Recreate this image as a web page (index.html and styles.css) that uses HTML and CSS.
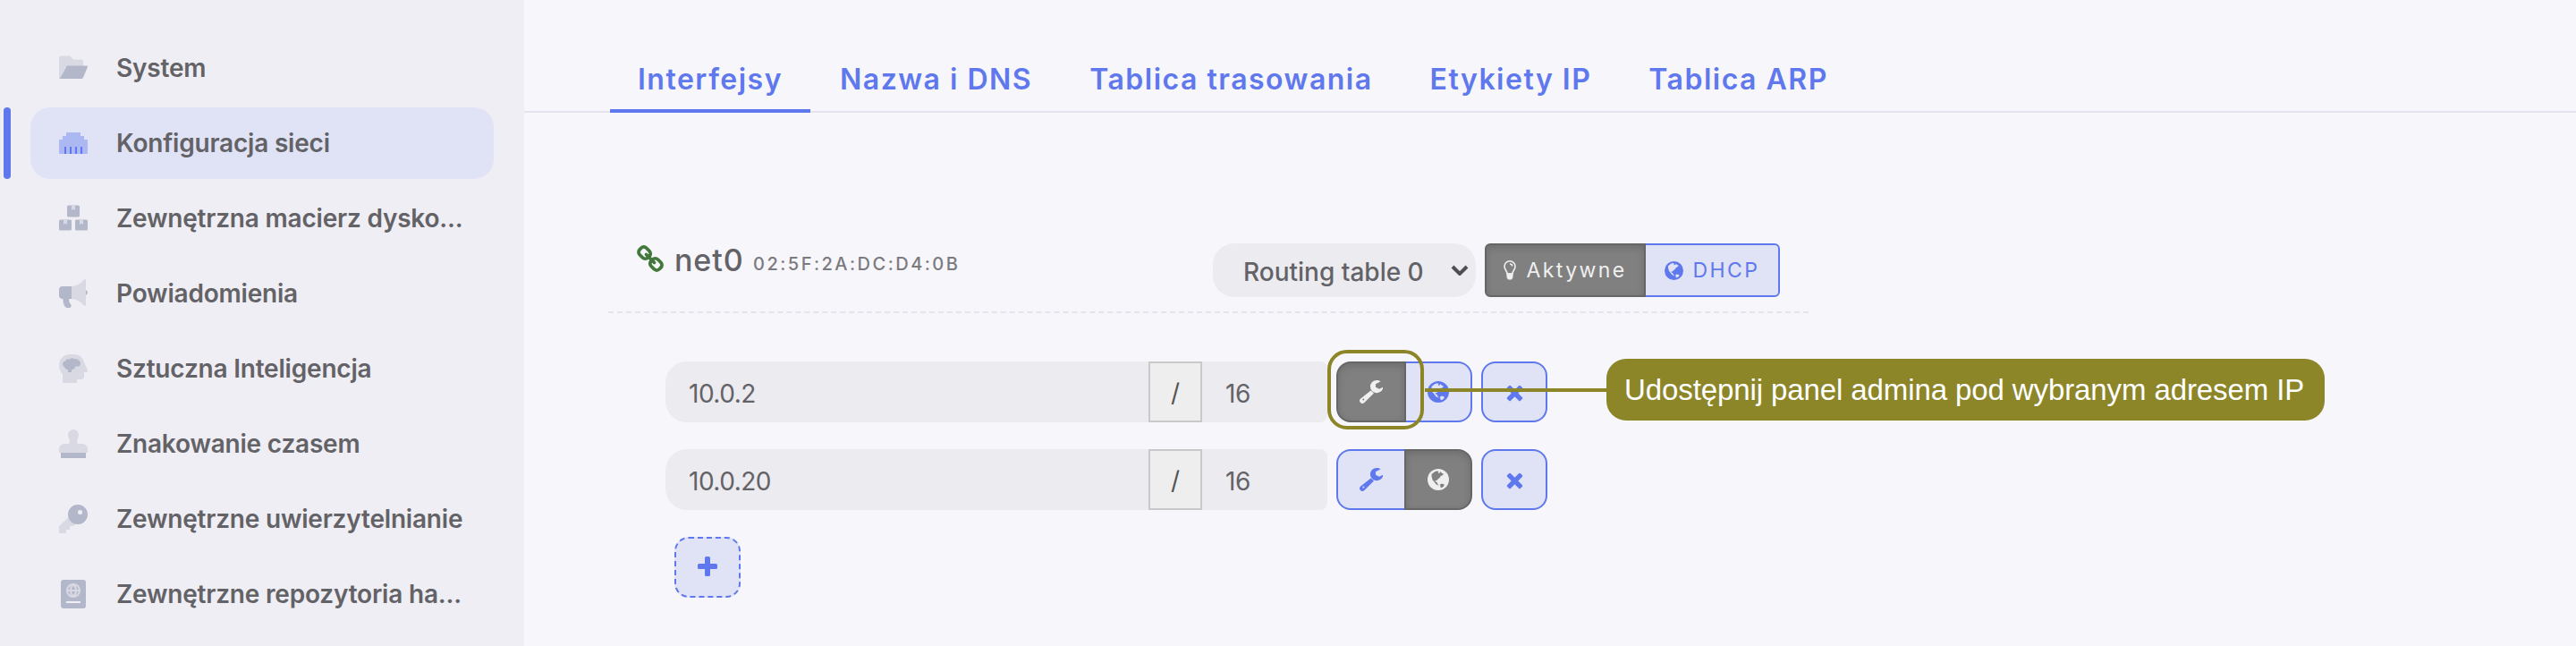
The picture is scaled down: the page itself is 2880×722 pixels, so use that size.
FILE: index.html
```html
<!DOCTYPE html>
<html lang="pl">
<head>
    <meta charset="UTF-8">
    <meta name="viewport" content="width=device-width, initial-scale=1.0">
    <title>Konfiguracja sieci</title>
    <link rel="stylesheet" href="styles.css">
</head>
<body>
    <!-- shared icons -->
    <svg class="sprite">
        <symbol id="wrench" viewBox="0 0 26 26">
            <path d="M12.6 11.6 1.2 20.4a3.3 3.3 0 0 0-.2 4.6 3.3 3.3 0 0 0 4.6-.2L16 14.6z"/>
            <path d="M23.6 1.2 18 4.2v3.6l4 2 4.2-2.2c.3 4-3.400 6.600-7 6.600-4 0-7.200-3.200-7.200-7.100S15.200 0 19.200 0c1.600 0 3.200.4 4.400 1.200z"/>
            <circle class="hole" cx="4.300" cy="21.600" r="1"/>
        </symbol>
        <symbol id="globe" viewBox="0 0 24 24">
            <circle cx="12" cy="12" r="12"/>
            <path class="hole" d="M4.500 6 8 3.200l3-.9 1.500 1.200-.8 1.400 2-.3 1-1.500 1.200 1.600 2 .8-.8 1.400-2.300 1-1.200 2-2 1.600-1.400 1.700-1.700-.4.6 1.700 1.600.6.5 2 1.500.8-.4.6-2.800-1.300-2-2.600-1.900-2.400-1-3.500z"/>
            <path class="hole" d="m14 17.500 1.800-.9 3 .8-.6 2-2.600 1.800-1-.5z"/>
        </symbol>
        <symbol id="times" viewBox="0 0 20 20">
            <rect x="-1" y="7.100" width="22" height="5.800" rx="1.500" transform="rotate(45 10 10)"/>
            <rect x="-1" y="7.100" width="22" height="5.800" rx="1.500" transform="rotate(-45 10 10)"/>
        </symbol>
    </svg>

    <div class="layout">
        <nav class="sidebar">
            <a class="menu-item">
                <svg class="menu-icon" viewBox="0 0 32 32"><path class="light" d="M0 29V5.500a3 3 0 0 1 3-3h8a3 3 0 0 1 2 .9L16 6.500h8a3 3 0 0 1 3 3V14H9.500a3 3 0 0 0-2.700 1.600z"/><path class="dark" d="M8.300 14.200A1.600 1.600 0 0 1 9.600 13.500H31a1 1 0 0 1 .9 1.500L26.800 27a2 2 0 0 1-1.700 1H.6z"/></svg>
                <span>System</span>
            </a>
            <a class="menu-item active">
                <svg class="menu-icon" viewBox="0 0 32 32"><path class="light" d="M8 4.500a.5.5 0 0 1 .5-.5h15a.5.5 0 0 1 .5.5V8h4v4h3a1 1 0 0 1 1 1v14a1 1 0 0 1-1 1H1a1 1 0 0 1-1-1V13a1 1 0 0 1 1-1h3V8h4z"/><path class="dark" d="M6 20h2v8H6zm6 0h2v8h-2zm6 0h2v8h-2zm6 0h2v8h-2z"/></svg>
                <span>Konfiguracja sieci</span>
            </a>
            <a class="menu-item">
                <svg class="menu-icon" viewBox="0 0 32 32"><path class="dark" d="M10.500 1.500h11a1.500 1.500 0 0 1 1.500 1.500v10a1.500 1.500 0 0 1-1.500 1.500h-11A1.500 1.500 0 0 1 9 13V3a1.500 1.500 0 0 1 1.500-1.500zM1.500 17.500h11a1.500 1.500 0 0 1 1.500 1.500v9a1.500 1.500 0 0 1-1.500 1.500h-11A1.500 1.500 0 0 1 0 28v-9a1.500 1.500 0 0 1 1.500-1.500zm18 0h11A1.500 1.500 0 0 1 32 19v9a1.500 1.500 0 0 1-1.500 1.500h-11A1.500 1.500 0 0 1 18 28v-9a1.500 1.500 0 0 1 1.500-1.500z"/><path class="light" d="M14 1.500h4V7l-2-1.300L14 7zM5 17.500h4V23l-2-1.300L5 23zm18 0h4V23l-2-1.300L23 23z"/></svg>
                <span>Zewnętrzna macierz dysko...</span>
            </a>
            <a class="menu-item">
                <svg class="menu-icon" viewBox="0 0 32 32"><path class="dark" d="M4 8h10v14h-2.500c-1 2.500 0 4 1.700 6.200 1 1.400.3 3.800-1.500 3.800H8.500C6 31 4 25.500 4.500 22H4a4 4 0 0 1-4-4v-6a4 4 0 0 1 4-4zm26 4.200c2.500 1 2.500 4.600 0 5.600z"/><path class="light" d="M14 8c6 0 10.500-4 14-7.500.8-.8 2-.3 2 1v27c0 1.300-1.200 1.800-2 1C24.500 26 20 22 14 22z"/></svg>
                <span>Powiadomienia</span>
            </a>
            <a class="menu-item">
                <svg class="menu-icon" viewBox="0 0 32 32"><path class="light" d="M4 32V22c-2.500-2.500-4-5.600-4-9C0 5 5.500 0 13 0h4c5 0 9 3 10.500 7.500L32 18c.3 1-.4 2-1.500 2H28v5a3 3 0 0 1-3 3h-5v4z"/><path class="dark" d="M4 11c0-2 1.500-3.200 3-3.500C8 5.500 10.500 4.800 12 5.800c1.500-2 4-2 5-.2 1.500-1 3.600-.5 4.300 1 1.700.4 2.700 2 2.700 3.600 0 2.200-1.500 3.300-3 3.300h-3c0 2-1.500 3.800-4 3.800V20h-4v-3c-2.500 0-3.500-1.500-3.800-3C4.800 13.300 4 12.400 4 11z"/></svg>
                <span>Sztuczna Inteligencja</span>
            </a>
            <a class="menu-item">
                <svg class="menu-icon" viewBox="0 0 32 32"><path class="light" d="M0 26v-4a6 6 0 0 1 6-6h4a2 2 0 0 0 2-2c0-3-2-4.500-2-8a6 6 0 0 1 12 0c0 3.500-2 5-2 8a2 2 0 0 0 2 2h4a6 6 0 0 1 6 6v4z"/><path class="dark" d="M2 26h28v6H2z"/></svg>
                <span>Znakowanie czasem</span>
            </a>
            <a class="menu-item">
                <svg class="menu-icon" viewBox="0 0 32 32"><path class="light" d="M11 14 .6 23.400A2 2 0 0 0 0 25v7h8v-4h4v-4h4l3-3z"/><path class="dark" fill-rule="evenodd" d="M21 0a11 11 0 1 1 0 22 11 11 0 0 1 0-22zm2.500 6a2.500 2.500 0 1 0 0 5 2.500 2.500 0 0 0 0-5z"/></svg>
                <span>Zewnętrzne uwierzytelnianie</span>
            </a>
            <a class="menu-item">
                <svg class="menu-icon" viewBox="0 0 32 32"><path class="dark" d="M5 0h22a3 3 0 0 1 3 3v26a3 3 0 0 1-3 3H5a3 3 0 0 1-3-3V3a3 3 0 0 1 3-3z"/><path class="cover" d="M16 5a7 7 0 1 0 0 14 7 7 0 0 0 0-14zM9 12h14M16 5c-4 4-4 10 0 14M16 5c4 4 4 10 0 14"/><path class="bar" d="M8 24h16v2H8z"/></svg>
                <span>Zewnętrzne repozytoria ha...</span>
            </a>
        </nav>

        <main class="content">
            <div class="tabs">
                <a class="tab selected">Interfejsy</a>
                <a class="tab">Nazwa i DNS</a>
                <a class="tab">Tablica trasowania</a>
                <a class="tab">Etykiety IP</a>
                <a class="tab">Tablica ARP</a>
            </div>

            <section class="interface">
                <header class="interface-header">
                    <svg class="link-icon" viewBox="0 0 30 30"><rect x="-6.500" y="-5.300" width="13" height="10.600" rx="4.200" transform="translate(8.600 8.600) rotate(45)"/><rect x="-6.500" y="-5.300" width="13" height="10.600" rx="4.200" transform="translate(21.400 21.400) rotate(45)"/><path d="m10.500 10.500 9 9"/></svg>
                    <h2>net0</h2>
                    <small>02:5F:2A:DC:D4:0B</small>
                    <div class="select">
                        <span>Routing table 0</span>
                        <svg viewBox="0 0 20 12"><path d="m2 2 8 8 8-8"/></svg>
                    </div>
                    <div class="btn-group small">
                        <button class="btn pressed">
                            <svg class="bulb" viewBox="0 0 14 22"><path d="M4 15C4 11.500 1 10.500 1 6.800a6 6 0 0 1 12 0C13 10.500 10 11.500 10 15z"/><path class="base" d="M3.500 14.500h7v4.500L9 21.500H5L3.500 19z"/><path d="M7 4c1.500 0 2.700 1.200 2.700 2.600"/></svg>
                            Aktywne
                        </button>
                        <button class="btn"><svg class="globe-small"><use href="#globe"/></svg>DHCP</button>
                    </div>
                </header>

                <div class="address-row">
                    <div class="field ip">10.0.2</div>
                    <div class="addon">/</div>
                    <div class="field mask">16</div>
                    <div class="btn-group">
                        <button class="btn pressed"><svg class="wrench"><use href="#wrench"/></svg></button>
                        <button class="btn"><svg class="globe"><use href="#globe"/></svg></button>
                        <span class="highlight"></span>
                        <div class="hint">Udostępnij panel admina pod wybranym adresem IP</div>
                    </div>
                    <button class="btn remove"><svg class="times"><use href="#times"/></svg></button>
                </div>

                <div class="address-row">
                    <div class="field ip">10.0.20</div>
                    <div class="addon">/</div>
                    <div class="field mask">16</div>
                    <div class="btn-group">
                        <button class="btn"><svg class="wrench"><use href="#wrench"/></svg></button>
                        <button class="btn pressed"><svg class="globe"><use href="#globe"/></svg></button>
                    </div>
                    <button class="btn remove"><svg class="times"><use href="#times"/></svg></button>
                </div>

                <button class="btn add"><svg viewBox="0 0 22 22"><path d="M9.500 0h3A1.500 1.500 0 0 1 14 1.500V8h6.500A1.500 1.500 0 0 1 22 9.500v3a1.500 1.500 0 0 1-1.500 1.500H14v6.500a1.500 1.500 0 0 1-1.500 1.500h-3A1.500 1.500 0 0 1 8 20.500V14H1.500A1.500 1.500 0 0 1 0 12.500v-3A1.500 1.500 0 0 1 1.500 8H8V1.500A1.500 1.500 0 0 1 9.500 0z"/></svg></button>
            </section>
        </main>
    </div>
</body>
</html>
```

FILE: styles.css
```css
* {
    box-sizing: border-box;
}
body {
    margin: 0;
    background-color: #f7f6fb;
    color: #636267;
    font-family: Inter, "Liberation Sans", sans-serif;
    font-size: 28px;
}
.sprite {
    display: none;
}
.layout {
    display: flex;
    height: 722px;
    overflow: hidden;
}

/* Menu */
.sidebar {
    display: flex;
    flex-direction: column;
    gap: 4px;
    width: 586px;
    padding: 36px 34px 0;
    flex-shrink: 0;
    background-color: #efeef4;
}
.menu-item {
    position: relative;
    display: flex;
    align-items: center;
    gap: 32px;
    height: 80px;
    padding-left: 32px;
    flex-shrink: 0;
    border-radius: 22px;
    font-weight: 600;
    white-space: nowrap;
    letter-spacing: -0.2px;
}
.menu-item.active {
    background-color: #e0e3f5;
}
.menu-item.active::before {
    content: "";
    position: absolute;
    left: -30px;
    top: 0;
    width: 8px;
    height: 80px;
    border-radius: 4px;
    background-color: #5f78ed;
}
.menu-icon {
    width: 32px;
    height: 32px;
}
.dark {
    fill: #b3b7ca;
}
.light {
    fill: #d8d9e3;
}
.cover {
    fill: none;
    stroke: #d8d9e3;
    stroke-width: 2;
}
.bar {
    fill: #efeef4;
}
.active .dark {
    fill: #5f78ed;
}
.active .light {
    fill: #abb8f1;
}

/* Tabs */
.content {
    flex: 1;
}
.tabs {
    display: flex;
    height: 126px;
    padding: 50px 0 0 96px;
    border-bottom: 2px solid #e3e4ed;
}
.tab {
    height: 76px;
    margin-right: 2px;
    padding: 0 31px;
    border-bottom: 4px solid transparent;
    color: #5f78ed;
    font-size: 32px;
    font-weight: 600;
    line-height: 77px;
    letter-spacing: 1.5px;
    white-space: nowrap;
}
.tab.selected {
    border-bottom-color: #5f78ed;
}

/* Interface */
.interface {
    width: 1342px;
    margin: 146px 0 0 94px;
}
.interface-header {
    display: flex;
    height: 78px;
    padding-left: 32px;
    border-bottom: 2px dashed #e3e4ed;
    margin-bottom: 54px;
}
.link-icon {
    width: 30px;
    height: 30px;
    margin: 2px 12px 0 0;
    fill: none;
    stroke: #43783c;
    stroke-width: 3.8;
    stroke-linecap: round;
}
h2 {
    width: 88px;
    margin: 0;
    font-size: 34px;
    font-weight: 500;
    line-height: 37px;
    letter-spacing: 0.9px;
}
small {
    width: 514px;
    color: #7b7a7f;
    font-size: 20px;
    font-weight: 500;
    line-height: 46px;
    letter-spacing: 2.5px;
}
.select {
    display: flex;
    align-items: center;
    justify-content: space-between;
    width: 294px;
    height: 60px;
    margin-right: 10px;
    padding: 4px 8px 0 34px;
    border-radius: 24px;
    background-color: #ecebf0;
    font-weight: 500;
    white-space: nowrap;
}
.select svg {
    width: 20px;
    height: 12px;
    margin-bottom: 4px;
    fill: none;
    stroke: #4f4f54;
    stroke-width: 4;
}

/* Buttons */
.btn {
    --hole: #e0e3f5;
    display: flex;
    align-items: center;
    justify-content: center;
    width: 74px;
    height: 68px;
    padding: 0;
    border: 2px solid #5f78ed;
    border-radius: 16px;
    background-color: #e0e3f5;
    color: #5f78ed;
    font-family: inherit;
    fill: #5f78ed;
}
.hole {
    fill: var(--hole);
}
.btn-group {
    position: relative;
    display: flex;
    margin: 0 10px;
}
.btn-group .btn:nth-child(1) {
    width: 78px;
    border-radius: 16px 0 0 16px;
}
.btn-group .btn:nth-child(2) {
    width: 76px;
    margin-left: -2px;
    border-radius: 0 16px 16px 0;
}
.btn.pressed {
    --hole: #808080;
    z-index: 1;
    border-color: #666;
    background-color: #808080;
    box-shadow: inset 0 3px 8px rgba(0, 0, 0, 0.15);
    color: #efefef;
    fill: #efefef;
}
.btn-group.small {
    margin: 0;
}
.btn-group.small .btn {
    height: 60px;
    font-size: 23px;
    letter-spacing: 2.4px;
}
.btn-group.small .btn:nth-child(1) {
    width: 180px;
    border-radius: 6px 0 0 6px;
}
.btn-group.small .btn:nth-child(2) {
    width: 152px;
    border-radius: 0 6px 6px 0;
}
.bulb {
    width: 14px;
    height: 22px;
    margin-right: 11px;
    fill: none;
    stroke: #efefef;
    stroke-width: 1.6;
}
.bulb .base {
    fill: #efefef;
    stroke: none;
}
.globe-small {
    width: 21px;
    height: 21px;
    margin-right: 11px;
}
.wrench {
    width: 26px;
    height: 26px;
}
.globe {
    width: 24px;
    height: 24px;
}
.times {
    width: 19px;
    height: 19px;
    margin-top: 2px;
}

/* Addresses */
.address-row {
    display: flex;
    height: 68px;
    margin: 0 0 30px 64px;
}
.field {
    padding-left: 26px;
    background-color: #ecebf0;
    line-height: 73px;
    letter-spacing: -0.5px;
}
.ip {
    width: 540px;
    border-radius: 24px 0 0 24px;
}
.mask {
    width: 140px;
    border-radius: 0 8px 8px 0;
}
.addon {
    width: 60px;
    border: 2px solid #c9c9c9;
    background-color: #eee;
    color: #555;
    line-height: 66px;
    text-align: center;
}
.add {
    margin-left: 74px;
    border-style: dashed;
}
.add svg {
    width: 22px;
    height: 22px;
    margin-bottom: 2px;
}

/* Hint over the first row */
.highlight {
    position: absolute;
    z-index: 2;
    left: -10px;
    top: -13px;
    width: 108px;
    height: 89px;
    border: 4px solid #8c8629;
    border-radius: 22px;
}
.hint {
    position: absolute;
    z-index: 2;
    left: 302px;
    top: -3px;
    width: 803px;
    height: 69px;
    padding-left: 20px;
    border-radius: 22px;
    background-color: #8c8629;
    color: #fff;
    font-family: "Liberation Sans", sans-serif;
    font-size: 33px;
    line-height: 70px;
    letter-spacing: -0.1px;
    white-space: nowrap;
}
.hint::before {
    content: "";
    position: absolute;
    left: -203px;
    top: 33px;
    width: 204px;
    height: 4px;
    background-color: #8c8629;
}
```
